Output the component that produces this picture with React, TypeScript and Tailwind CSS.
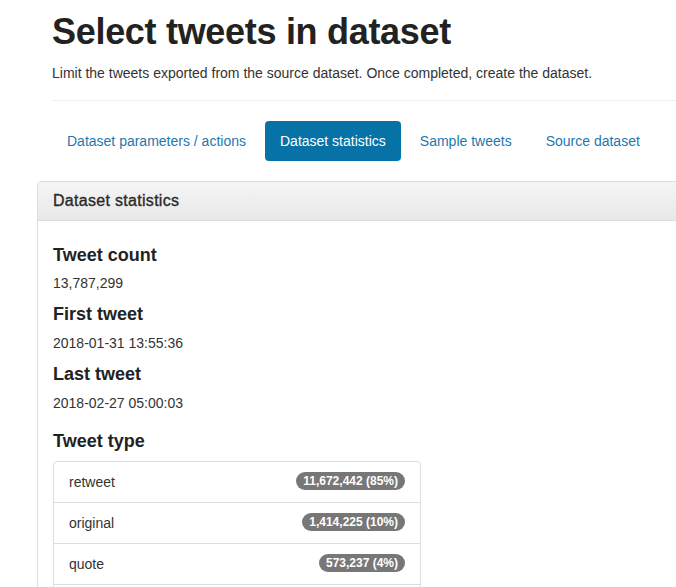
import React from "react";

const tabs = [
  { label: "Dataset parameters / actions", active: false },
  { label: "Dataset statistics", active: true },
  { label: "Sample tweets", active: false },
  { label: "Source dataset", active: false },
];

const stats = [
  { label: "Tweet count", value: "13,787,299" },
  { label: "First tweet", value: "2018-01-31 13:55:36" },
  { label: "Last tweet", value: "2018-02-27 05:00:03" },
];

const tweetTypes = [
  { type: "retweet", count: "11,672,442 (85%)" },
  { type: "original", count: "1,414,225 (10%)" },
  { type: "quote", count: "573,237 (4%)" },
];

export default function App() {
  return (
    <div className="h-[587px] overflow-hidden bg-white font-['Liberation_Sans',Arial,sans-serif] text-[14px] leading-[20px] text-[#333]">
      <div className="pl-[37px]">
        <div className="ml-[15px] pt-[12px] pb-[17px] border-b border-[#eee]">
          <h1 className="text-[36px] leading-[40px] font-bold tracking-[-0.3px] text-[#222]">Select tweets in dataset</h1>
          <p className="mt-[11px]">Limit the tweets exported from the source dataset. Once completed, create the dataset.</p>
        </div>

        <ul className="ml-[15px] mt-[20px] flex gap-[4px]">
          {tabs.map((t) => (
            <li key={t.label}>
              <a
                href="#"
                className={
                  t.active
                    ? "block px-[15px] py-[10px] rounded-[4px] bg-[#0672a5] text-white"
                    : "block px-[15px] py-[10px] rounded-[4px] text-[#1f77b0]"
                }
              >
                {t.label}
              </a>
            </li>
          ))}
        </ul>

        <div className="mt-[20px] -mr-[40px] border border-[#ddd] rounded-[4px]">
          <div className="px-[15px] py-[10px] border-b border-[#ddd] rounded-t-[3px] bg-gradient-to-b from-[#f5f5f5] to-[#e8e8e8]">
            <h3 className="text-[16px] leading-[17.6px] tracking-[0.3px] text-[#2a2a2a] [-webkit-text-stroke:0.35px_#2a2a2a]">Dataset statistics</h3>
          </div>
          <div className="p-[15px]">
            {stats.map((s, i) => (
              <div key={s.label} className={i === 0 ? "mt-[10px]" : ""}>
                <h4 className="text-[18px] leading-[19.8px] font-bold text-[#222]">{s.label}</h4>
                <p className="mt-[8px] mb-[12px]">{s.value}</p>
              </div>
            ))}
            <h4 className="mt-[19px] text-[18px] leading-[19.8px] font-bold text-[#222]">Tweet type</h4>
            <div className="mt-[9px] w-[368px] border border-[#ddd] rounded-[4px]">
              {tweetTypes.map((r, i) => (
                <div
                  key={r.type}
                  className={
                    i === 0
                      ? "flex items-start justify-between px-[15px] py-[10px]"
                      : "flex items-start justify-between px-[15px] py-[10px] border-t border-[#ddd]"
                  }
                >
                  <span>{r.type}</span>
                  <span className="inline-block px-[7px] py-[3px] rounded-[10px] bg-[#777] text-white text-[12px] leading-[12px] font-bold">
                    {r.count}
                  </span>
                </div>
              ))}
              <div className="h-[41px] border-t border-[#ddd]" />
            </div>
          </div>
        </div>
      </div>
    </div>
  );
}
